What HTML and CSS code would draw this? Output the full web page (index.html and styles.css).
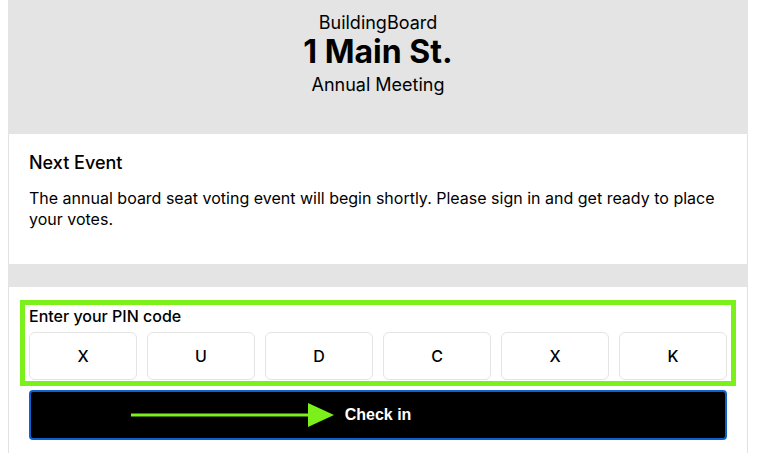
FILE: index.html
```html
<!DOCTYPE html>
<html>
<head>
<meta charset="utf-8">
<link rel="stylesheet" href="styles.css">
</head>
<body>
<div class="app">
  <header class="header">
    <div class="brand">BuildingBoard</div>
    <h1 class="title">1 Main St.</h1>
    <div class="subtitle">Annual Meeting</div>
  </header>
  <section class="card event">
    <h2 class="card-title">Next Event</h2>
    <p class="card-text">The annual board seat voting event will begin shortly. Please sign in and get ready to place your votes.</p>
  </section>
  <div class="spacer"></div>
  <section class="card checkin">
    <div class="pin-highlight">
      <label class="pin-label">Enter your PIN code</label>
      <div class="pin-row">
        <div class="pin-box">X</div>
        <div class="pin-box">U</div>
        <div class="pin-box">D</div>
        <div class="pin-box">C</div>
        <div class="pin-box">X</div>
        <div class="pin-box">K</div>
      </div>
    </div>
    <button class="checkin-btn">
      <svg class="arrow" width="204" height="26" viewBox="0 0 204 26"><line x1="0" y1="13" x2="180" y2="13" stroke="#7cf01a" stroke-width="3"/><polygon points="177,1 203,13 177,25" fill="#7cf01a"/></svg>
      Check in
    </button>
  </section>
</div>
</body>
</html>
```
FILE: styles.css
```css
html, body {
  margin: 0;
  padding: 0;
  background: #ffffff;
}
.app {
  width: 740px;
  margin-left: 8px;
  font-family: Inter, "Noto Sans", sans-serif;
  color: #000;
}
.header {
  background: #e4e4e4;
  height: 134px;
  box-sizing: border-box;
  padding-top: 13px;
  text-align: center;
}
.brand {
  font-size: 18px;
  line-height: 20px;
}
.title {
  margin: 0;
  font-size: 32px;
  line-height: 38px;
  font-weight: 700;
}
.subtitle {
  margin-top: 2px;
  font-size: 18px;
  line-height: 24px;
}
.card {
  background: #fff;
  border-left: 1px solid #e2e2e2;
  border-right: 1px solid #e2e2e2;
}
.event {
  height: 130px;
  box-sizing: border-box;
  padding: 18px 20px 0;
}
.card-title {
  margin: 0;
  font-size: 18px;
  font-weight: 500;
  line-height: 22px;
}
.card-text {
  margin: 14px 0 0;
  font-size: 16px;
  line-height: 21px;
}
.spacer {
  height: 23px;
  background: #e4e4e4;
}
.checkin {
  padding: 13px 20px 14px 11px;
  font-family: "Liberation Sans", Arial, sans-serif;
}
.pin-highlight {
  border: 5px solid #7cf01a;
  padding: 1px 4px 1px;
  width: 698px;
  box-sizing: content-box;
}
.pin-label {
  display: block;
  font-size: 16px;
  line-height: 20px;
  font-family: Inter, "Noto Sans", sans-serif;
  font-weight: 500;
}
.pin-row {
  display: flex;
  gap: 10px;
  margin-top: 6px;
}
.pin-box {
  flex: 1;
  height: 48px;
  box-sizing: border-box;
  border: 1px solid #e4e4e4;
  border-radius: 6px;
  display: flex;
  align-items: center;
  justify-content: center;
  font-family: Inter, "Noto Sans", sans-serif;
  font-weight: 500;
  font-size: 16px;
}
.checkin-btn {
  position: relative;
  display: block;
  margin: 4px 0 0 9px;
  width: 698px;
  height: 50px;
  background: #000;
  color: #fff;
  border: 2px solid #0b62d0;
  border-radius: 4px;
  font-family: "Liberation Sans", Arial, sans-serif;
  font-weight: 700;
  font-size: 16px;
}
.arrow {
  position: absolute;
  left: 100px;
  top: 10px;
}
```
